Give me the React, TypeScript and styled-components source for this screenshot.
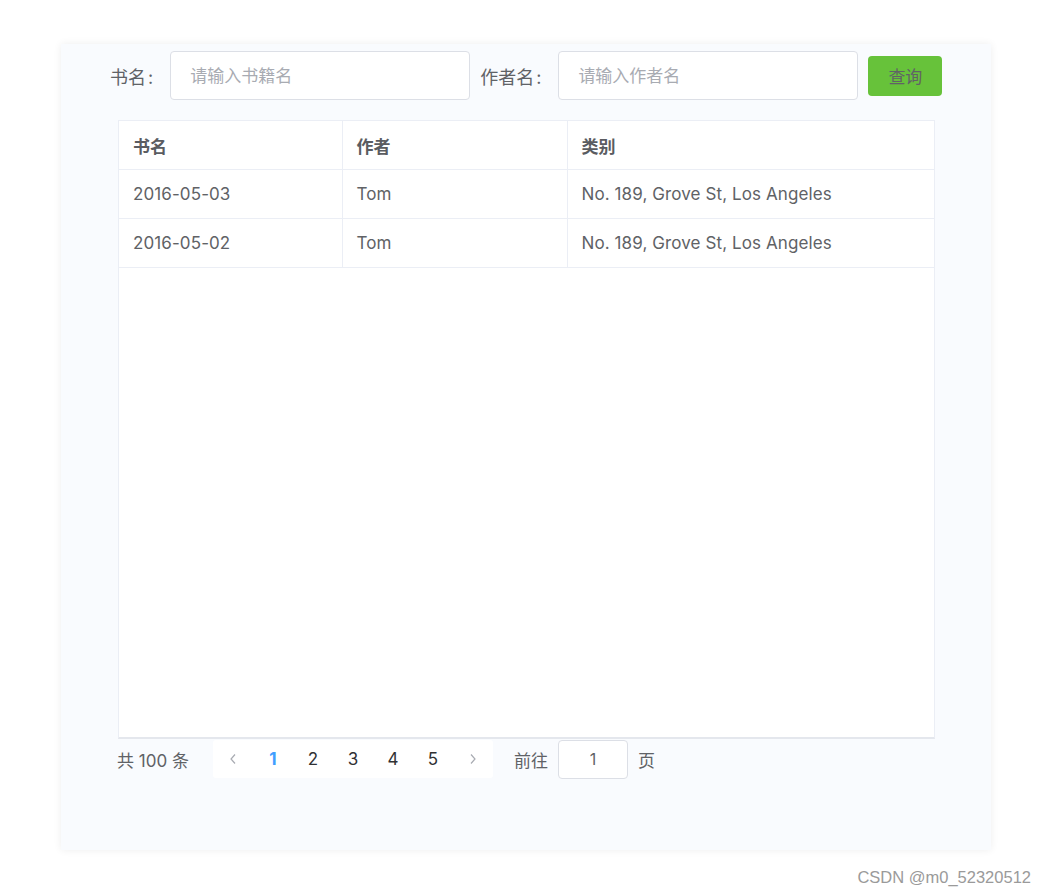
import React from "react";
import styled, { createGlobalStyle } from "styled-components";

const GlobalStyle = createGlobalStyle`
  html, body {
    margin: 0;
    padding: 0;
    background: #ffffff;
    font-family: Inter, "Noto Sans CJK SC", sans-serif;
  }
`;

const Page = styled.div`
  position: relative;
  width: 1046px;
  height: 895px;
  padding-top: 44px;
  padding-left: 61px;
  box-sizing: border-box;
`;

const Card = styled.div`
  width: 930px;
  height: 806px;
  background: #f9fbfe;
  box-shadow: 0 0 8px rgba(0, 0, 0, 0.07);
  padding-top: 7px;
  box-sizing: border-box;
  display: flex;
  flex-direction: column;
`;

const SearchBar = styled.div`
  display: flex;
  align-items: center;
  padding-left: 49px;
  gap: 10px;
`;

const Field = styled.label`
  display: flex;
  align-items: center;
`;

const FieldLabel = styled.span`
  font-size: 18px;
  color: #606266;
  margin-right: 17px;
  white-space: nowrap;
  &::after {
    content: ":";
    margin-left: 2px;
  }
`;

const TextInput = styled.input`
  width: 300px;
  height: 49px;
  box-sizing: border-box;
  border: 1px solid #dcdfe6;
  border-radius: 4px;
  background: #fff;
  padding: 0 19px;
  font-size: 17px;
  font-family: inherit;
  color: #606266;
  outline: none;
  &::placeholder {
    color: #a8abb2;
  }
`;

const QueryButton = styled.button`
  width: 74px;
  height: 40px;
  border: none;
  border-radius: 4px;
  background: #67c23a;
  color: #606266;
  font-size: 17px;
  font-family: inherit;
  cursor: pointer;
`;

const TableWrap = styled.div`
  margin: 20px 0 0 57px;
  width: 817px;
  height: 619px;
  box-sizing: border-box;
  background: #fff;
  border: 1px solid #ebeef5;
  border-bottom: 2px solid #e4e7ed;
`;

const Table = styled.table`
  width: 100%;
  border-collapse: collapse;
  table-layout: fixed;
`;

const Th = styled.th`
  height: 48px;
  text-align: left;
  padding: 0 14px;
  font-size: 17px;
  font-weight: 700;
  color: #5a5c61;
  border-bottom: 1px solid #ebeef5;
  border-right: 1px solid #ebeef5;
  &:last-child {
    border-right: none;
  }
`;

const Td = styled.td`
  height: 48px;
  padding: 0 14px;
  font-size: 17px;
  color: #606266;
  border-bottom: 1px solid #ebeef5;
  border-right: 1px solid #ebeef5;
  white-space: nowrap;
  letter-spacing: 0.1px;
  &:last-child {
    border-right: none;
  }
`;

const Pager = styled.div`
  display: flex;
  align-items: center;
  padding-left: 56px;
  height: 40px;
`;

const Total = styled.span`
  font-size: 17px;
  color: #606266;
  margin-right: 24px;
`;

const PageList = styled.div`
  display: flex;
  background: #fff;
  border-radius: 3px;
  height: 38px;
`;

const PageBtn = styled.span<{ $active?: boolean; $arrow?: boolean }>`
  width: 40px;
  height: 38px;
  display: flex;
  align-items: center;
  justify-content: center;
  font-size: 17px;
  font-weight: ${(p) => (p.$active ? 700 : 400)};
  color: ${(p) => (p.$active ? "#409eff" : p.$arrow ? "#a8abb2" : "#303133")};
`;

const Jumper = styled.span`
  display: flex;
  align-items: center;
  font-size: 17px;
  color: #606266;
  margin-left: 21px;
  gap: 10px;
`;

const JumpInput = styled.input`
  width: 70px;
  height: 39px;
  box-sizing: border-box;
  border: 1px solid #dcdfe6;
  border-radius: 4px;
  text-align: center;
  font-size: 16px;
  font-family: inherit;
  color: #606266;
  background: #fff;
  outline: none;
`;

const Watermark = styled.div`
  position: absolute;
  right: 15px;
  bottom: 8px;
  font-family: "Liberation Sans", Arial, sans-serif;
  font-size: 16.5px;
  color: #9a9a9a;
`;

const Chevron = ({ dir }: { dir: "left" | "right" }) => (
  <svg width="10" height="12" viewBox="0 0 10 12" fill="none">
    <path
      d={dir === "left" ? "M7 1.5L3 6l4 4.5" : "M3 1.5L7 6l-4 4.5"}
      stroke="currentColor"
      strokeWidth="1.2"
    />
  </svg>
);

const rows = [
  { date: "2016-05-03", name: "Tom", addr: "No. 189, Grove St, Los Angeles" },
  { date: "2016-05-02", name: "Tom", addr: "No. 189, Grove St, Los Angeles" },
];

export default function App() {
  return (
    <Page>
      <GlobalStyle />
      <Card>
        <SearchBar>
          <Field>
            <FieldLabel>书名</FieldLabel>
            <TextInput placeholder="请输入书籍名" />
          </Field>
          <Field>
            <FieldLabel>作者名</FieldLabel>
            <TextInput placeholder="请输入作者名" />
          </Field>
          <QueryButton>查询</QueryButton>
        </SearchBar>

        <TableWrap>
          <Table>
            <colgroup>
              <col style={{ width: 223 }} />
              <col style={{ width: 225 }} />
              <col />
            </colgroup>
            <thead>
              <tr>
                <Th>书名</Th>
                <Th>作者</Th>
                <Th>类别</Th>
              </tr>
            </thead>
            <tbody>
              {rows.map((r, i) => (
                <tr key={i}>
                  <Td>{r.date}</Td>
                  <Td>{r.name}</Td>
                  <Td>{r.addr}</Td>
                </tr>
              ))}
            </tbody>
          </Table>
        </TableWrap>

        <Pager>
          <Total>共 100 条</Total>
          <PageList>
            <PageBtn $arrow>
              <Chevron dir="left" />
            </PageBtn>
            {[1, 2, 3, 4, 5].map((n) => (
              <PageBtn key={n} $active={n === 1}>
                {n}
              </PageBtn>
            ))}
            <PageBtn $arrow>
              <Chevron dir="right" />
            </PageBtn>
          </PageList>
          <Jumper>
            前往
            <JumpInput defaultValue="1" />
            页
          </Jumper>
        </Pager>
      </Card>
      <Watermark>CSDN @m0_52320512</Watermark>
    </Page>
  );
}
